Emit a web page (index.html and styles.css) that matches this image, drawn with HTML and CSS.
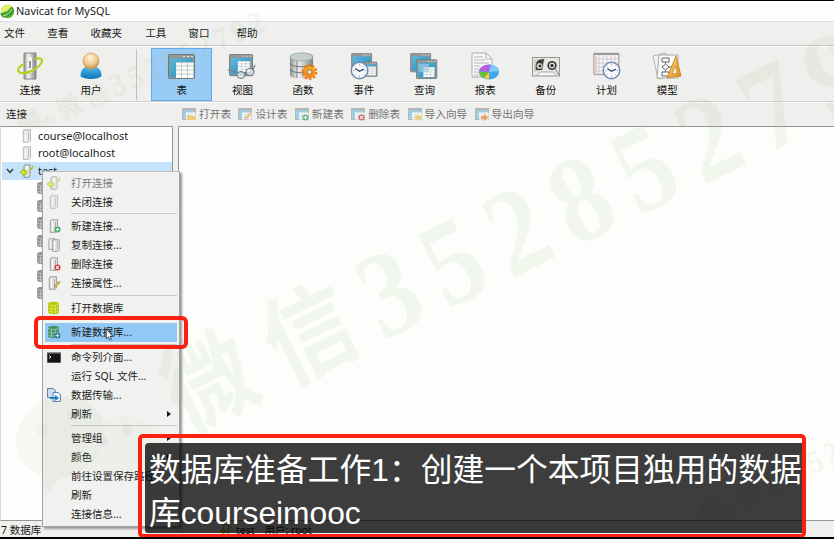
FILE: index.html
```html
<!DOCTYPE html>
<html lang="zh-CN">
<head>
<meta charset="utf-8">
<title>Navicat for MySQL</title>
<link rel="stylesheet" href="styles.css">
</head>
<body>
<svg class="defs" width="0" height="0">
  <defs>
    <linearGradient id="steel" x1="0" x2="1" y1="0" y2="0"><stop offset="0" stop-color="#8d9291"/><stop offset=".35" stop-color="#f3f5f4"/><stop offset="1" stop-color="#7f8584"/></linearGradient>
    <linearGradient id="blue" x1="0" x2="1" y1="0" y2="1"><stop offset="0" stop-color="#5eb9e0"/><stop offset="1" stop-color="#2288ba"/></linearGradient>
    <linearGradient id="body" x1="0" x2="0" y1="0" y2="1"><stop offset="0" stop-color="#4fc0ec"/><stop offset="1" stop-color="#0a76b8"/></linearGradient>
    <radialGradient id="head" cx=".45" cy=".3" r=".7"><stop offset="0" stop-color="#fff3df"/><stop offset=".6" stop-color="#f0c98f"/><stop offset="1" stop-color="#c78b45"/></radialGradient>
    <radialGradient id="gear" cx=".5" cy=".4" r=".6"><stop offset="0" stop-color="#ffd23c"/><stop offset="1" stop-color="#f37a08"/></radialGradient>
    <linearGradient id="gold" x1="0" x2="1" y1="0" y2="1"><stop offset="0" stop-color="#ffe08a"/><stop offset="1" stop-color="#db8a12"/></linearGradient>
    <symbol id="window" viewBox="0 0 28 26"><rect x=".5" y=".5" width="26" height="24" rx="1" fill="#929898" stroke="#717777"/><path d="M15 2.5h2m2 0h2m2 0h2" stroke="#e8eaea"/><rect x="2" y="4.500" width="23" height="18.500" fill="url(#blue)"/></symbol>
    <symbol id="sheet" viewBox="0 0 18 16"><path d="M0 0h18v16H0z" fill="#fcfcfb"/><path d="M0 .5h18M0 4h18M0 8h18M0 12h18M5.500 0v16M11.500 0v16M17.500 0v16" stroke="#b4bec2" stroke-width=".8" fill="none"/></symbol>
    <symbol id="clock" viewBox="0 0 20 20"><circle cx="10" cy="10" r="8.700" fill="#f8fafc" stroke="#7289b0" stroke-width="1.500"/><path d="M10 2.800v2m0 10.400v2M2.800 10h2m10.400 0h2M5 5l1 1m8-1l1-1M5 15l1-1m8 0l1 1" stroke="#96a2b8" stroke-width=".8"/><path d="M5.500 8L10 10.800l4.500-2.200" fill="none" stroke="#26476d" stroke-width="1.300"/></symbol>
    <symbol id="server" viewBox="0 0 10 14"><path d="M2 .8h6.500v11l-1.300 1.500H1.300V2z" fill="#dfe1de" stroke="#8b908d" stroke-width=".8"/><path d="M3.500 2v10" stroke="#fff"/><path d="M6.500 3v8" stroke="#adb1ae"/></symbol>
    <symbol id="plugged" viewBox="0 0 14 14"><path d="M5 .8h5v11l-1 1.500H4V2z" fill="#e0e4db" stroke="#7b817a" stroke-width=".8"/><path d="M7 2v9" stroke="#fff"/><path d="M0 8l4-3v2h3v3H4v2z" fill="#d5e629" stroke="#94a717" stroke-width=".7"/><path d="M9.500 5.500c3-.5 3.500-2 3-4" fill="none" stroke="#b3c920" stroke-width="1.500"/></symbol>
    <symbol id="drum" viewBox="0 0 14 14"><path d="M1 3c0-3 11-3 11 0v8c0 3-11 3-11 0z" fill="currentColor"/><path d="M1 3c0 2 11 2 11 0M1 6.500c0 2 11 2 11 0M1 9.500c0 2 11 2 11 0M4.500 4.500v8M8.500 4.500v8" fill="none" stroke="#fff" stroke-opacity=".45" stroke-width=".8"/></symbol>
    <symbol id="table" viewBox="0 0 14 13"><rect x=".5" y=".5" width="13" height="11" fill="#9dcfe6" stroke="#b5b5b5"/><path d="M1 1.500h12" stroke="#b4b7b7" stroke-width="2"/><rect x="4" y="4.500" width="9.500" height="7" fill="#fafafa"/><path d="M4 7h9M4 9.300h9M7 4.500v7M10 4.500v7" stroke="#cbd4d8" stroke-width=".6"/></symbol>
    <symbol id="add" viewBox="0 0 8 8"><circle cx="4" cy="4" r="3.500" fill="#47a866"/><path d="M4 2v4M2 4h4" stroke="#fff" stroke-width="1.200"/></symbol>
    <symbol id="del" viewBox="0 0 8 8"><circle cx="4" cy="4" r="3.500" fill="#cf4040"/><path d="M2.500 2.500l3 3m0-3l-3 3" stroke="#fff" stroke-width="1.200"/></symbol>
    <g id="mark">
      <g opacity=".75">
        <path d="M-168-58a47 40 0 1 1-20 77l-21 10 6-21a47 40 0 0 1 35-66z"/>
        <ellipse cx="-120" cy="20" rx="38" ry="32" opacity=".45"/>
        <g class="eyes"><circle cx="-182" cy="-32" r="6"/><circle cx="-148" cy="-32" r="6"/><circle cx="-133" cy="5" r="5.500"/><circle cx="-106" cy="5" r="5.500"/></g>
      </g>
      <g transform="scale(1 1.14)">
        <text class="mark-han" x="-11 100" y="30">微信</text>
        <text class="mark-num" x="190 261 332 403 474 545 616 687 758" y="33">352852792</text>
      </g>
    </g>
  </defs>
</svg>

<div class="window">
  <header class="title">
    <svg width="15" height="15" viewBox="0 0 15 15"><circle cx="7.500" cy="7.500" r="6.700" fill="#59b52c"/><path d="M1 5c3-5 9-5 11-3L7 7 1 9z" fill="#e3ef6a"/><path d="M0 9c3 2 9 0 12-6l2 3c-2 5-7 8-12 7z" fill="#3b9831"/><path d="M3 12c4-1 7-3 9-7" stroke="#d4f2b5" fill="none"/></svg>
    <span>Navicat for MySQL</span>
  </header>
  <nav class="menubar"><span>文件</span><span>查看</span><span>收藏夹</span><span>工具</span><span>窗口</span><span>帮助</span></nav>

  <div class="toolbar">
    <div class="tool"><svg viewBox="0 0 28 28"><path d="M8 1h12v26H8z" fill="url(#steel)" stroke="#868a88"/><path d="M12 5h4v16h-4z" fill="#f4f4f2"/><path d="M14 9v7" stroke="#555" stroke-width="1.200"/><path d="M8 12c-7 4-8 8-2 9 8 1 21-8 20-13-.5-2-4-2-7-1" fill="none" stroke="#b9cf22" stroke-width="2.200"/></svg><span>连接</span></div>
    <div class="tool"><svg viewBox="0 0 28 28"><path d="M3.500 24c0-7 4-10 10.500-10s10.500 3 10.500 10c-3 4-18 4-21 0z" fill="url(#body)"/><circle cx="14" cy="9" r="8" fill="url(#head)" stroke="#d29a58" stroke-width=".7"/></svg><span>用户</span></div>
    <i class="divider"></i>
    <div class="tool active"><svg viewBox="0 0 28 28"><use href="#window" y="2" width="28" height="26"/><use href="#sheet" x="8" y="10" width="18" height="16"/></svg><span>表</span></div>
    <div class="tool"><svg viewBox="0 0 28 28"><use href="#window" x="1" y="2" width="25" height="23"/><use href="#sheet" x="9" y="9" width="14" height="11"/><g fill="#e9efef" fill-opacity=".75" stroke="#777e80" stroke-width="1.200"><path d="M0 18l9 2"/><ellipse cx="13" cy="23" rx="4" ry="3.300"/><ellipse cx="22" cy="20" rx="4" ry="3.500"/><path d="M17 22l2-1m6-3l2-5" /></g></svg><span>视图</span></div>
    <div class="tool"><svg viewBox="0 0 28 28"><path d="M1 5c0-6 23-6 23 0v18c0 5-23 5-23 0z" fill="url(#steel)"/><ellipse cx="12.500" cy="5" rx="11.500" ry="4" fill="#c5d0ce" stroke="#8e9896" stroke-width=".6"/><path d="M1 11c0 5 23 5 23 0M1 17c0 5 23 5 23 0M8 9v17" fill="none" stroke="#707b79"/><circle cx="20.500" cy="20" r="6.600" fill="none" stroke="#f17b0c" stroke-width="2.500" stroke-dasharray="2.600 1.550"/><circle cx="20.500" cy="20" r="5.800" fill="url(#gear)"/><circle cx="20.500" cy="20" r="2.700" fill="#d8d6cd" stroke="#c15d08"/></svg><span>函数</span></div>
    <div class="tool"><svg viewBox="0 0 28 28"><use href="#window" x="1" y="1" width="22" height="20"/><use href="#window" x="11" y="8" width="17" height="19"/><use href="#sheet" x="16" y="14" width="10" height="10"/><use href="#clock" x="0" y="9" width="19" height="19"/></svg><span>事件</span></div>
    <div class="tool"><svg viewBox="0 0 28 28"><use href="#window" x="0" y="1" width="22" height="20"/><use href="#window" x="6" y="7" width="22" height="21"/><use href="#sheet" x="12" y="15" width="14" height="10"/><path d="M9 12h10v8H9z" fill="#9fc9df" opacity=".65"/></svg><span>查询</span></div>
    <div class="tool"><svg viewBox="0 0 28 28"><path d="M1 1h14l6 6v18H1z" fill="#f8f8f7" stroke="#aaa"/><path d="M15 1v6h6M3 5h9M3 8h11M3 11h15M3 14h6M3 17h5M3 20h5M3 23h5" fill="none" stroke="#b3b5b5"/><ellipse cx="18" cy="20" rx="10" ry="7.500" fill="#43a6eb"/><path d="M18 20L8 19c1-5 7-7 12-6z" fill="#bc5fdc"/><path d="M18 20L8 20c0 3 3 5 5 6z" fill="#67bf36"/><path d="M18 20l-5 6 5 1.500z" fill="#f9cb28"/><path d="M18 20l2-7c5 0 8 3 8 6z" fill="#78ccf5"/></svg><span>报表</span></div>
    <div class="tool"><svg viewBox="0 0 28 28"><rect x=".5" y="5.500" width="27" height="18.500" fill="#e8e7e3" stroke="#999"/><path d="M2 8l11-2-2 12-9 2z" fill="#d2cec3"/><path d="M4 18c-1-4 0-9 3-10l5-1-2 11z" fill="#373735"/><circle cx="7.500" cy="14" r="3" fill="#c8c5b6"/><circle cx="8" cy="14" r="1.200" fill="#222"/><circle cx="20" cy="13.500" r="4.600" fill="#333"/><circle cx="20" cy="13.500" r="3" fill="#ddd"/><circle cx="20" cy="13.500" r="1.600" fill="#222"/><path d="M5 23l3-3h13l3 3" fill="#f8f8f8" stroke="#aaa"/><path d="M22 15l5 8" stroke="#777"/></svg><span>备份</span></div>
    <div class="tool"><svg viewBox="0 0 28 28"><rect x=".8" y="1.500" width="25" height="21" rx="1" fill="#f6f4f3" stroke="#a9a6a6" stroke-width="1.300"/><path d="M1 2h25" stroke="#999" stroke-width="2"/><path d="M2 7h23M2 11h23M2 15h23M2 19h23M6 3v19M10 3v19M14 3v19M18 3v19M22 3v19" stroke="#c9c5c5" stroke-width=".8"/><path d="M3 4v17" stroke="#edbbb8" stroke-width="1.500"/><use href="#clock" x="9" y="9" width="19" height="19"/></svg><span>计划</span></div>
    <div class="tool"><svg viewBox="0 0 28 28"><path d="M0 4l13-3 5 23-13 3z" fill="#f1f0ef" stroke="#b4b4b4"/><path d="M6 3h19v23H4z" fill="#fbfbfa" stroke="#aaa"/><path d="M9 6h7v4H9zM9 20h7v4H9zM12.500 10v2M12.500 18v2M9 15l3.500-3 3.500 3-3.500 3zM16 15h3" fill="none" stroke="#626664"/><path d="M23 4l5 20-14 2z" fill="url(#gold)" stroke="#c77b15" stroke-width=".8"/><path d="M22.500 14l1.700 7-5 1z" fill="#f7f6ef" stroke="#c77b15" stroke-width=".6"/></svg><span>模型</span></div>
  </div>

  <div class="subbar">
    <strong>连接</strong>
    <div class="actions">
      <span><svg viewBox="0 0 14 13"><use href="#table" width="14" height="13"/><path d="M5 7h3l1 1h5v4H5z" fill="#f1cb7c"/></svg>打开表</span>
      <span><svg viewBox="0 0 14 13"><use href="#table" width="14" height="13"/><path d="M6 12l1-3 5-5 2 2-5 5z" fill="#e6c58b"/></svg>设计表</span>
      <span><svg viewBox="0 0 14 13"><use href="#table" width="14" height="13"/><use href="#add" x="7" y="6" width="7" height="7" opacity=".8"/></svg>新建表</span>
      <span><svg viewBox="0 0 14 13"><use href="#table" width="14" height="13"/><use href="#del" x="7" y="6" width="7" height="7" opacity=".75"/></svg>删除表</span>
      <span><svg viewBox="0 0 14 13"><use href="#table" width="14" height="13"/><path d="M13.500 8h-3V6L6 9.500l4.500 3.500v-2h3z" fill="#ecd26a"/></svg>导入向导</span>
      <span><svg viewBox="0 0 14 13"><use href="#table" width="14" height="13"/><path d="M6 8h3V6l4.500 3.500L9 13v-2H6z" fill="#eda15f"/></svg>导出向导</span>
    </div>
  </div>

  <main class="panes">
    <aside class="tree">
      <div class="node"><svg class="srv"><use href="#server" width="10" height="14"/></svg>course@localhost</div>
      <div class="node"><svg class="srv"><use href="#server" width="10" height="14"/></svg>root@localhost</div>
      <div class="node open"><svg class="chevron" viewBox="0 0 8 6"><path d="M1 1l3 3.500L7 1" fill="none" stroke="#333" stroke-width="1.300"/></svg><svg class="plug"><use href="#plugged" width="14" height="14"/></svg>test</div>
      <div class="node db"><svg><use href="#drum" width="14" height="14"/></svg></div>
      <div class="node db"><svg><use href="#drum" width="14" height="14"/></svg></div>
      <div class="node db"><svg><use href="#drum" width="14" height="14"/></svg></div>
      <div class="node db"><svg><use href="#drum" width="14" height="14"/></svg></div>
      <div class="node db"><svg><use href="#drum" width="14" height="14"/></svg></div>
      <div class="node db"><svg><use href="#drum" width="14" height="14"/></svg></div>
      <div class="node db"><svg><use href="#drum" width="14" height="14"/></svg></div>
    </aside>
    <section class="content"></section>
  </main>
  <footer class="status"><span>7 数据库</span><span class="session"><svg><use href="#plugged" width="12" height="12"/></svg>test</span><span>用户: root</span></footer>

  <div class="context">
    <div class="item off"><svg viewBox="0 0 14 14" opacity=".6"><use href="#plugged" width="14" height="14"/></svg>打开连接</div>
    <div class="item"><svg viewBox="0 0 14 14"><use href="#server" x="2" width="10" height="14" opacity=".6"/></svg>关闭连接</div>
    <hr>
    <div class="item"><svg viewBox="0 0 14 14"><use href="#server" x="2" width="10" height="14"/><use href="#add" x="7" y="7" width="7" height="7"/></svg>新建连接...</div>
    <div class="item"><svg viewBox="0 0 14 14"><use href="#server" width="10" height="12"/><use href="#server" x="4" y="1" width="10" height="13"/></svg>复制连接...</div>
    <div class="item"><svg viewBox="0 0 14 14"><use href="#server" x="2" width="10" height="14"/><use href="#del" x="7" y="7" width="7" height="7"/></svg>删除连接</div>
    <div class="item"><svg viewBox="0 0 14 14"><use href="#server" x="1" width="10" height="14"/><path d="M7 12l1-3 4-4 1.500 1.500-4 4z" fill="#d8bb45" stroke="#8d8a73" stroke-width=".5"/></svg>连接属性...</div>
    <hr>
    <div class="item"><svg class="lime" viewBox="0 0 14 14"><use href="#drum" width="14" height="14"/></svg>打开数据库</div>
    <hr>
    <div class="item selected"><svg class="green" viewBox="0 0 14 14"><use href="#drum" width="14" height="14"/><circle cx="10.500" cy="10.500" r="3" fill="#2b8898"/><path d="M10.500 8.700v3.600M8.700 10.500h3.600" stroke="#c5ecef"/></svg>新建数据库...</div>
    <hr>
    <div class="item"><svg viewBox="0 0 14 14"><path d="M0 2h14v11H0z" fill="#8d8d8d"/><path d="M.5 3.500h13v9H.5z" fill="#151515"/><path d="M2 5.500l2 1.500-2 1.500" fill="none" stroke="#eee"/></svg>命令列介面...</div>
    <div class="item"><svg viewBox="0 0 14 14"></svg>运行 SQL 文件...</div>
    <div class="item"><svg viewBox="0 0 14 14"><path d="M.5.500h6l2 2v7h-8z" fill="#cddcf1" stroke="#6282b3"/><path d="M6 4.500h5l2.500 2v7H6z" fill="#edf3fb" stroke="#6282b3"/><path d="M3 5v4h5v-2l4 3-4 3v-2H3z" fill="#1680cf"/></svg>数据传输...</div>
    <div class="item sub"><svg viewBox="0 0 14 14"></svg>刷新</div>
    <hr>
    <div class="item sub"><svg viewBox="0 0 14 14"></svg>管理组</div>
    <div class="item sub"><svg viewBox="0 0 14 14"></svg>颜色</div>
    <div class="item"><svg viewBox="0 0 14 14"></svg>前往设置保存路径</div>
    <div class="item"><svg viewBox="0 0 14 14"></svg>刷新</div>
    <div class="item"><svg viewBox="0 0 14 14"></svg>连接信息...</div>
  </div>

  <svg class="watermark" viewBox="0 0 834 539">
    <use href="#mark" transform="translate(220 379) rotate(-26)"/>
    <use href="#mark" transform="translate(72 106) rotate(-24) scale(.266)"/>
    <use href="#mark" transform="translate(753 493) rotate(-26) scale(.266)"/>
  </svg>

  <div class="focus"></div>
  <svg class="cursor" viewBox="0 0 8 12"><path d="M1 .8v9l2-1.700 1.300 3 1.500-.7-1.300-2.700H7z" fill="#fff" stroke="#222" stroke-width=".7"/></svg>
  <div class="caption"><p>数据库准备工作1：创建一个本项目独用的数据库courseimooc</p></div>
</div>
</body>
</html>
```
FILE: styles.css
```css
* { box-sizing: border-box; }
body { margin: 0; overflow: hidden; background: #000; color: #1c1c1c; font: 10.5px/16px "Noto Sans", "Noto Sans CJK SC", sans-serif; }
svg { flex: none; overflow: visible; }
.defs { position: absolute; }
.window { position: relative; display: flex; flex-direction: column; width: 834px; height: 539px; overflow: hidden; border-top: 1px solid #000; border-bottom: 2px solid #000; background: #efefee; white-space: nowrap; }

.title { display: flex; align-items: center; gap: 1px; height: 20px; background: #fefefe; font-size: 10.9px; }
.menubar { display: flex; gap: 22px; height: 25px; align-items: center; padding: 0 0 2px 4px; border-top: 1px solid #dcdcdc; border-bottom: 1px solid #c6c6c6; font-size: 10.6px; }
.menubar span:nth-child(4) { margin-left: 1px; }
.menubar span:last-child { margin-left: 5px; }

.toolbar { display: flex; height: 56px; padding-top: 1px; border-top: 1px solid #fbfbfb; border-bottom: 1px solid #cfcfcf; }
.tool { display: flex; flex-direction: column; align-items: center; width: 60.7px; height: 53px; padding-top: 3px; border: 1px solid transparent; color: #111; }
.tool svg { width: 28px; height: 28px; margin-bottom: 2px; }
.tool.active { border-color: #62acec; background: #99cbf7; }
.divider { width: 1px; height: 51px; margin: 1px 14px 0 15px; background: #c0c0c0; }

.subbar { display: flex; height: 24px; align-items: center; padding: 0 0 1px 6px; border-top: 1px solid #fafafa; }
.subbar strong { width: 176px; font-weight: 400; }
.actions { display: flex; gap: 7.3px; color: #747474; font-size: 10.7px; }
.actions span { display: flex; align-items: center; gap: 3px; }
.actions svg { width: 14px; height: 13px; }

.panes { display: flex; flex: 1; gap: 5px; }
.tree { width: 173px; border: 1px solid #959797; border-left-color: #dcdcdc; background: #fefefe; font-size: 10.9px; }
.node { display: flex; align-items: center; height: 17.5px; padding-left: 21px; }
.srv { width: 10px; height: 14px; margin-right: 6px; opacity: .75; }
.open { padding-left: 4px; margin-left: 1px; background: #c5e3fa; }
.chevron { width: 8px; height: 6px; margin-right: 6px; }
.plug { width: 14px; height: 14px; margin-right: 4px; }
.db { padding-left: 35px; color: #92958f; }
.db svg { width: 14px; height: 14px; }
.content { flex: 1; border: 1px solid #959797; border-right: 0; background: #fdfefc; }
.status { display: flex; height: 16px; align-items: center; gap: 10px; padding-top: 2px; }
.status > :first-child { width: 210px; padding-left: 1px; }
.session { display: flex; gap: 4px; }
.session svg { width: 12px; height: 12px; margin-top: 2px; }

.context { position: absolute; left: 42px; top: 170px; width: 138px; height: 356px; padding: 1px 2px 2px; border: 1px solid #a3a3a3; border-top-color: #bebebe; background: #f1f1f0; box-shadow: 2px 2px 2px #999; }
.item { position: relative; display: flex; align-items: center; gap: 10px; height: 19px; padding-left: 2px; }
.item svg { width: 14px; height: 14px; }
.item .lime { color: #b9ca00; }
.item .green { color: #45976a; }
.context hr { height: 1px; margin: 2px 0 2.5px 26px; border: 0; background: #c9c9c9; }
.off { color: #7b7b7b; }
.selected { background: #91c8f6; }
.sub::after { content: ""; margin-left: auto; margin-right: 6px; border: 3.5px solid transparent; border-left: 4px solid #111; border-right: 0; }

.watermark { position: absolute; left: 0; top: -1px; width: 834px; height: 539px; fill: #78a83c; opacity: .075; }
.mark-han, .mark-num { text-anchor: middle; font-weight: 700; }
.mark-han { font-family: "Noto Sans CJK SC", sans-serif; font-size: 88px; }
.mark-num { font-family: "Liberation Serif", serif; font-size: 108px; }
.eyes { fill: #222; }

.focus { position: absolute; left: 34px; top: 315px; width: 154px; height: 33px; border: 4px solid #fb2112; border-radius: 6px; }
.cursor { position: absolute; left: 105px; top: 327px; width: 9px; height: 13px; }
.caption { position: absolute; left: 138px; top: 433px; width: 668px; height: 104px; padding: 5px 0 0 3px; border: 4px solid #fb2112; border-radius: 5px; }
.caption p { width: 657px; height: 90px; margin: 0; padding: 6px 0 0 4px; border-radius: 4px 0 0 3px; background: rgba(0, 0, 0, .76); color: #fff; font: 400 31.75px/43px "Liberation Sans", "Noto Sans CJK SC", sans-serif; white-space: normal; word-break: break-all; }
```
